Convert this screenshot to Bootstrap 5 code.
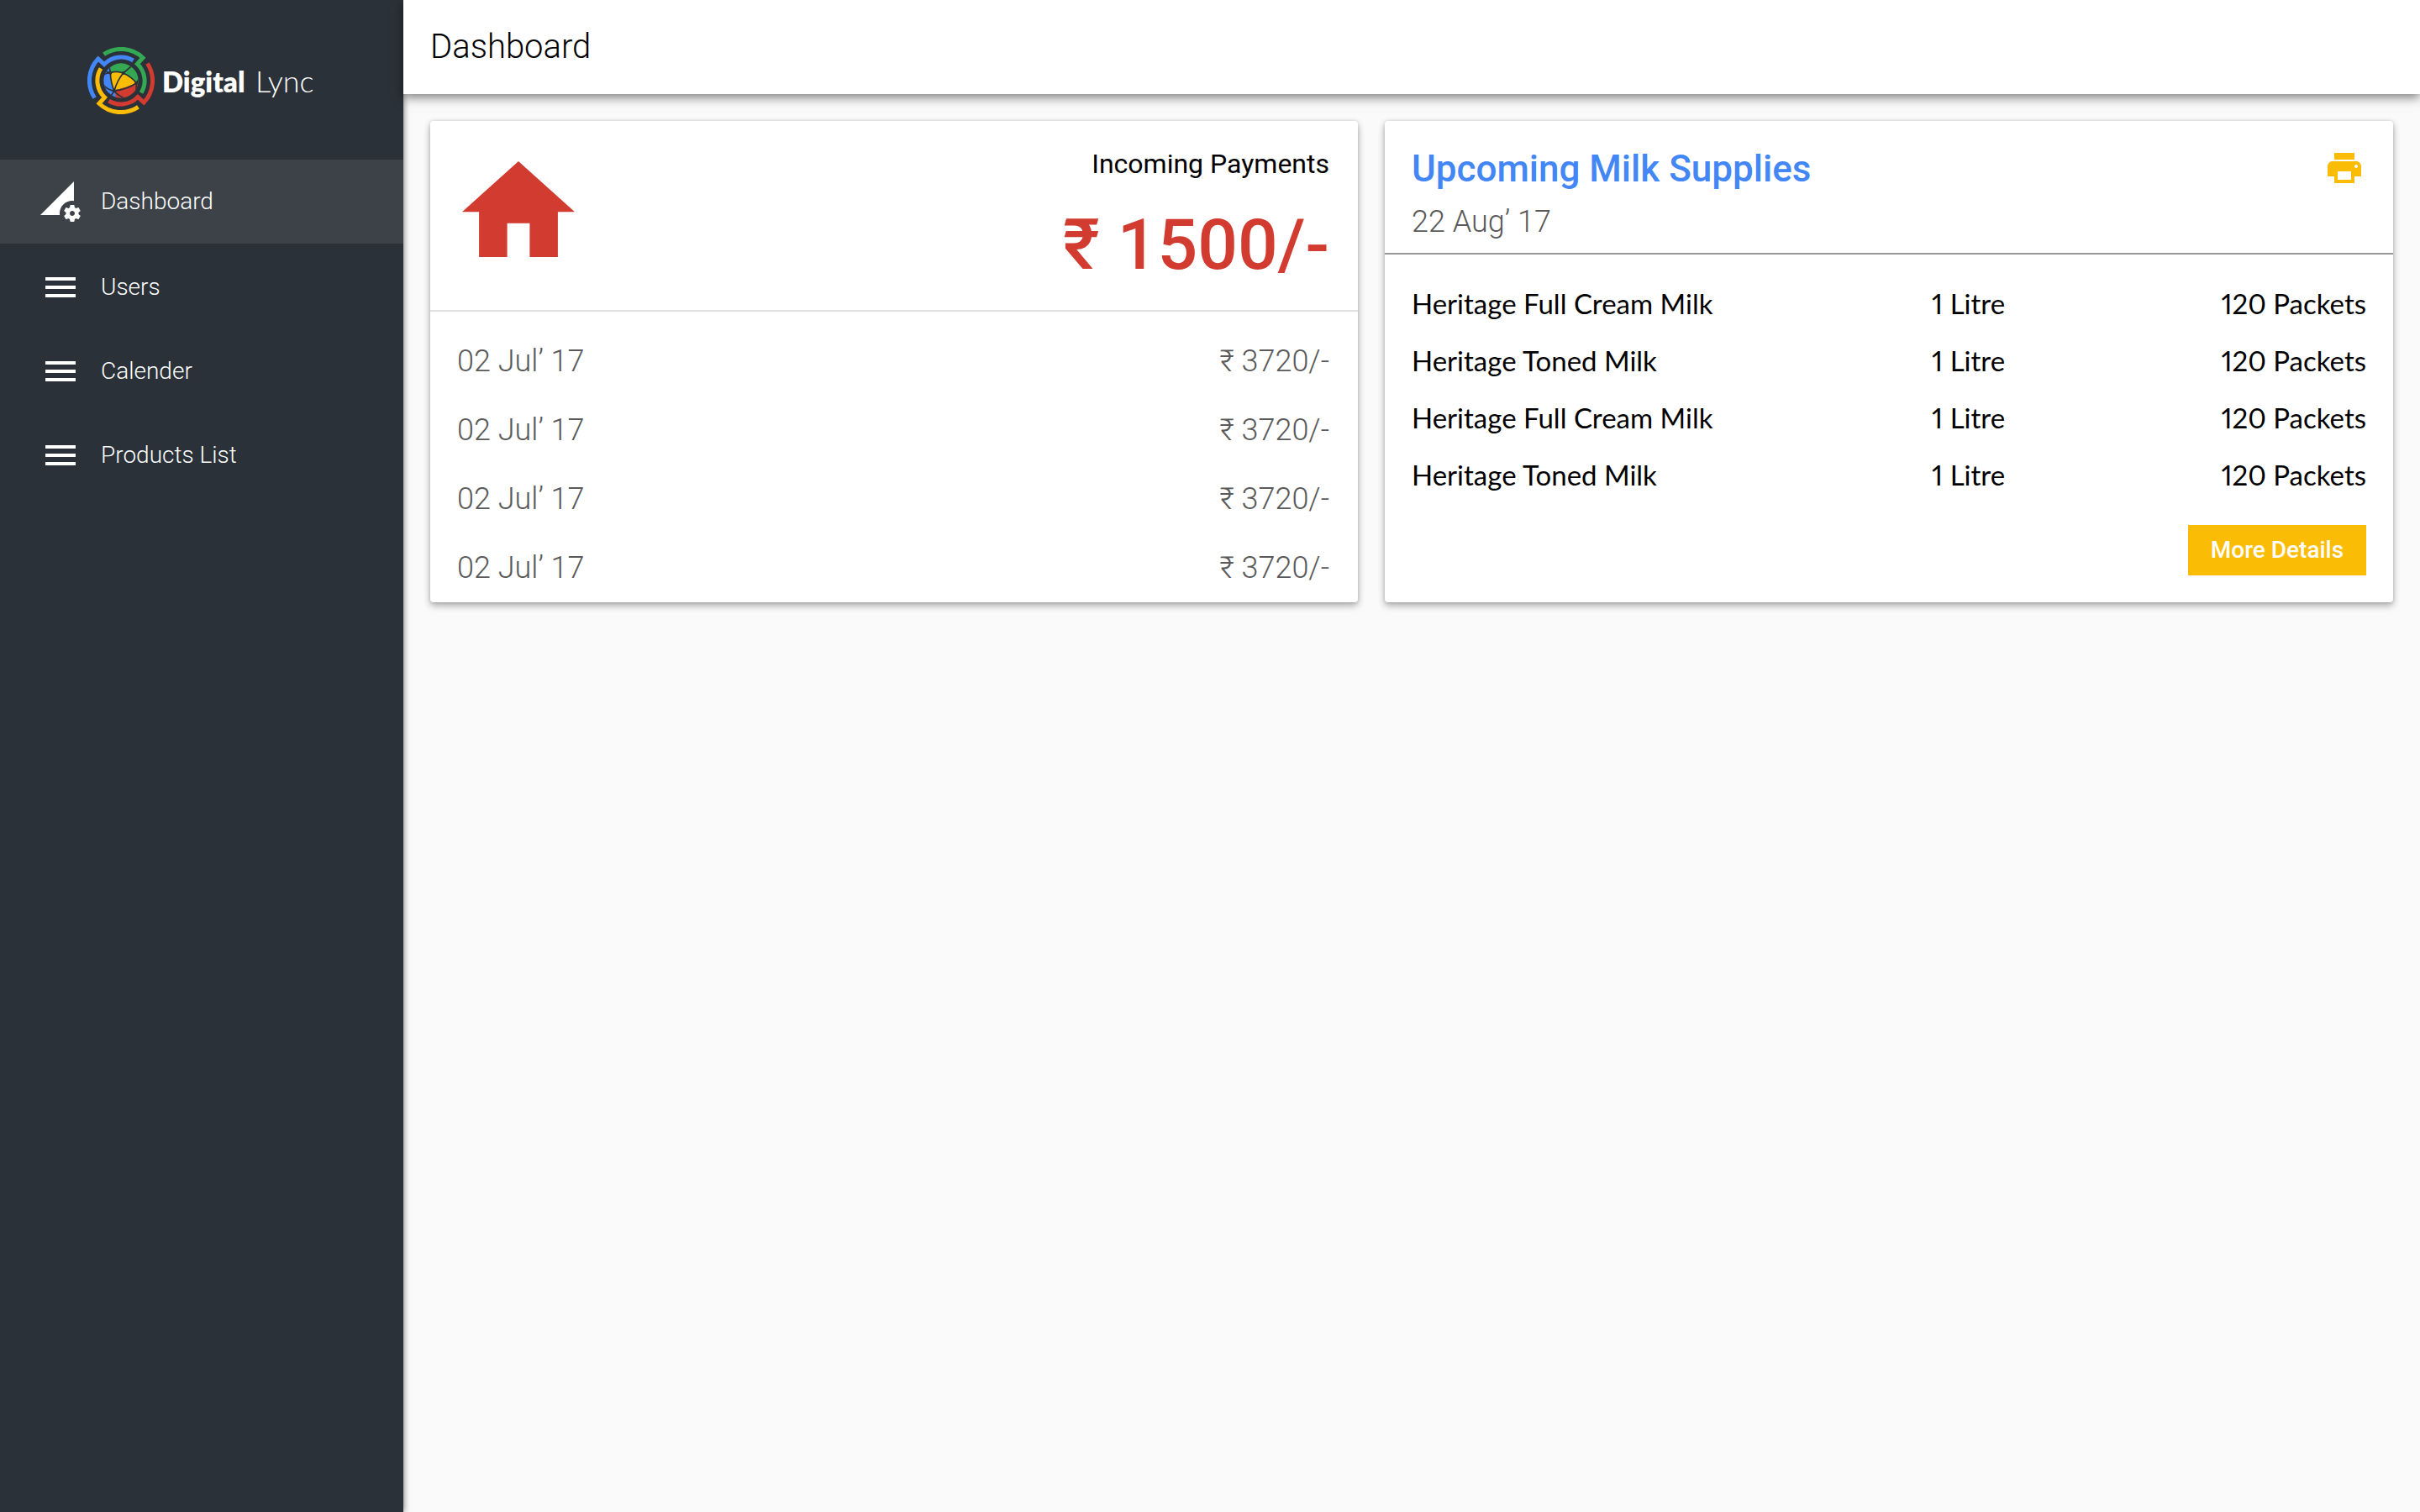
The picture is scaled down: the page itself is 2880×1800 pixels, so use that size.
<!DOCTYPE html>
<html lang="en">
<head>
<meta charset="utf-8">
<meta name="viewport" content="width=device-width, initial-scale=1">
<title>Digital Lync – Dashboard</title>
<link rel="stylesheet" href="https://cdn.jsdelivr.net/npm/bootstrap@5.3.0/dist/css/bootstrap.min.css">
<style>
  body { background: #fafafa; color: #000; font-family: Roboto, "Noto Sans", sans-serif; }
  .fw-thin { font-weight: 300; }
  .side-panel { width: 480px; background: #2a3138; box-shadow: 0 0 8px rgba(0, 0, 0, .6); }
  .brand { height: 190px; padding: 2px 0 0 104px; gap: 9px; color: #fff; font-family: Lato, sans-serif; font-size: 33px; line-height: 40px; }
  .brand b { font-weight: 800; }
  .brand .fw-thin { font-size: 36px; }
  .brand:hover { color: #fff; }
  .side-panel .nav-link { height: 100px; padding: 0 48px; gap: 24px; color: #fff; font-size: 28px; line-height: 44px; font-weight: 300; }
  .side-panel .nav-link.active { background: #3c4248; margin-bottom: 2px; }
  .top-bar { height: 112px; padding: 0 32px; background: #fff; box-shadow: 0 4px 12px rgba(0, 0, 0, .5); z-index: 2; }
  .top-bar h1 { font-size: 40px; line-height: 48px; }
  .panels { padding: 32px; gap: 32px; }
  .panel { border: 0; border-radius: 4px; color: #000; box-shadow: 0 4px 8px rgba(0, 0, 0, .32), 0 0 4px rgba(0, 0, 0, .12); }
  .payments { flex: 1104 1 0; }
  .supplies { flex: 1200 1 0; }
  .pay-head { padding: 32px 34px 25px 38px; border-bottom: 2px solid #e0e0e0; }
  .pay-head svg { margin-top: 16px; }
  .pay-head h2 { font-size: 32px; line-height: 38px; margin-bottom: 26px; }
  .pay-total { font-size: 84px; font-weight: 500; line-height: 104px; color: #d23b30; }
  .pay-list { padding: 18px 34px 0 32px; }
  .pay-list li { font-size: 36px; line-height: 82px; color: #5a5a5a; }
  .sup-head { padding: 28px 32px 3px; border-bottom: 2px solid #979797; }
  .sup-head h2 { font-size: 44px; line-height: 58px; color: #4386f5; }
  .sup-date { font-size: 36px; line-height: 68px; color: #5a5a5a; }
  .print-btn { line-height: 0; margin: 4px 2px 0 0; }
  .sup-body { padding: 24px 32px 32px; }
  .sup-table { font-family: Lato, sans-serif; font-size: 33px; line-height: 68px; font-variant-numeric: proportional-nums; }
  .sup-table th, .sup-table td { padding: 0; }
  .sup-table th { font-weight: 400; }
  .sup-table .col-name { width: 54.5%; }
  .more-btn { width: 212px; height: 60px; padding: 0; border: 0; border-radius: 0; background: #fbbc05; color: #fff; font-size: 28px; line-height: 60px; font-weight: 500; }
</style>
<script src="https://cdn.jsdelivr.net/npm/bootstrap@5.3.0/dist/js/bootstrap.bundle.min.js"></script>
</head>
<body>
<svg class="d-none" aria-hidden="true">
  <symbol id="i-menu" viewBox="0 0 24 24"><path d="M3 18h18v-2H3v2zm0-5h18v-2H3v2zm0-7v2h18V6H3z"/></symbol>
</svg>
<div class="d-flex min-vh-100">
  <aside class="side-panel flex-shrink-0 position-relative z-1">
    <a href="#" class="brand d-flex align-items-center text-decoration-none">
      <svg width="80" height="80" viewBox="-40 -40 80 80" aria-hidden="true">
        <defs>
          <clipPath id="globe"><circle r="62"/></clipPath>
          <path id="arm" d="M-20.5-31.4A37.5 37.5 0 0 1 26-27.2L19.4-20A27.5 27.5 0 0 1 24 14.5" fill="none" stroke-width="5" stroke-miterlimit="10"/>
        </defs>
        <use href="#arm" stroke="#34a853"/>
        <use href="#arm" stroke="#d23b30" transform="rotate(90)"/>
        <use href="#arm" stroke="#fbbc05" transform="rotate(180)"/>
        <use href="#arm" stroke="#4386f5" transform="rotate(270)"/>
        <g transform="scale(.3333)" clip-path="url(#globe)">
          <path fill="#34a853" d="M-40-70H70V8H55Q35-15 8-27Q-15-35-40-30Z"/>
          <path fill="#4386f5" d="M-70-70H-38V-30Q-38 5-24 34L-10 70H-70Z"/>
          <path fill="#fbbc05" d="M-38-28Q-15-35 8-27Q35-15 55 8Q20 25-24 34Q-38 5-38-28Z"/>
          <path fill="#d23b30" d="M-24 34Q20 25 55 8H70V70H-16Z"/>
          <g fill="none" stroke="#2a3138" stroke-width="5">
            <path d="M-44-64Q-40-40-38-28Q-37 5-24 38Q-8 56 22 68M-66-20Q-50-28-38-28Q-15-36 8-27Q35-15 55 8L54 46M8-27L38-52M8-27Q-14 0-24 36L-40 62M-66 12Q-50 32-24 37Q28 30 55 8L66-8M-38-28L-62-36"/>
          </g>
          <g fill="#2a3138"><circle cx="8" cy="-27" r="6"/><circle cx="-24" cy="37" r="6"/><circle cx="-38" cy="-28" r="6"/><circle cx="55" cy="8" r="6"/></g>
        </g>
      </svg>
      <span><b>Digital</b> <span class="fw-thin ms-1">Lync</span></span>
    </a>
    <nav class="nav flex-column">
      <a class="nav-link active d-flex align-items-center" href="#" aria-current="page">
        <svg width="48" height="48" viewBox="0 0 24 24" fill="currentColor" aria-hidden="true"><path d="M18.99 11.5c.34 0 .67.03 1 .07L20 0 0 20h11.56c-.04-.33-.07-.66-.07-1 0-4.14 3.36-7.5 7.5-7.5zm3.71 7.99c.02-.16.04-.32.04-.49 0-.17-.01-.33-.04-.49l1.06-.83c.09-.08.12-.21.06-.32l-1-1.73c-.06-.11-.19-.15-.31-.11l-1.24.5c-.26-.2-.54-.37-.85-.49l-.19-1.32c-.01-.12-.12-.21-.24-.21h-2c-.12 0-.23.09-.25.21l-.19 1.32c-.3.13-.59.29-.85.49l-1.24-.5c-.11-.04-.24 0-.31.11l-1 1.73c-.06.11-.04.24.06.32l1.06.83c-.02.16-.03.32-.03.49 0 .17.01.33.03.49l-1.06.83c-.09.08-.12.21-.06.32l1 1.73c.06.11.19.15.31.11l1.24-.5c.26.2.54.37.85.49l.19 1.32c.02.12.12.21.25.21h2c.12 0 .23-.09.25-.21l.19-1.32c.3-.13.59-.29.84-.49l1.25.5c.11.04.24 0 .31-.11l1-1.73c.06-.11.03-.24-.06-.32l-1.07-.83zm-3.71 1.01c-.83 0-1.5-.67-1.5-1.5s.67-1.5 1.5-1.5 1.5.67 1.5 1.5-.67 1.5-1.5 1.5z"/></svg>
        Dashboard
      </a>
      <a class="nav-link d-flex align-items-center" href="#"><svg width="48" height="48" fill="currentColor" aria-hidden="true"><use href="#i-menu"/></svg>Users</a>
      <a class="nav-link d-flex align-items-center" href="#"><svg width="48" height="48" fill="currentColor" aria-hidden="true"><use href="#i-menu"/></svg>Calender</a>
      <a class="nav-link d-flex align-items-center" href="#"><svg width="48" height="48" fill="currentColor" aria-hidden="true"><use href="#i-menu"/></svg>Products List</a>
    </nav>
  </aside>

  <div class="flex-grow-1 d-flex flex-column">
    <header class="top-bar d-flex align-items-center position-relative">
      <h1 class="fw-thin mb-0">Dashboard</h1>
    </header>
    <main class="panels d-flex align-items-stretch">
      <section class="card panel payments">
        <div class="pay-head d-flex justify-content-between align-items-start">
          <svg width="134" height="114" viewBox="2 3 20 17" fill="#d23b30" aria-hidden="true"><path d="M10 20v-6h4v6h5v-8h3L12 3 2 12h3v8z"/></svg>
          <div class="text-end">
            <h2 class="fw-normal">Incoming Payments</h2>
            <div class="pay-total">₹ 1500/-</div>
          </div>
        </div>
        <ul class="pay-list list-unstyled mb-0 fw-thin">
          <li class="d-flex justify-content-between"><span>02 Jul’ 17</span><span>₹ 3720/-</span></li>
          <li class="d-flex justify-content-between"><span>02 Jul’ 17</span><span>₹ 3720/-</span></li>
          <li class="d-flex justify-content-between"><span>02 Jul’ 17</span><span>₹ 3720/-</span></li>
          <li class="d-flex justify-content-between"><span>02 Jul’ 17</span><span>₹ 3720/-</span></li>
        </ul>
      </section>

      <section class="card panel supplies">
        <div class="sup-head d-flex justify-content-between align-items-start">
          <div>
            <h2 class="mb-0">Upcoming Milk Supplies</h2>
            <div class="sup-date fw-thin">22 Aug’ 17</div>
          </div>
          <button type="button" class="btn print-btn border-0 p-0" aria-label="Print">
            <svg width="48" height="48" viewBox="0 0 24 24" fill="#fbbc05" aria-hidden="true"><path d="M19 8H5c-1.660 0-3 1.340-3 3v6h4v4h12v-4h4v-6c0-1.660-1.340-3-3-3zm-3 11H8v-5h8v5zm3-7c-.55 0-1-.45-1-1s.45-1 1-1 1 .45 1 1-.45 1-1 1zm-1-9H6v4h12V3z"/></svg>
          </button>
        </div>
        <div class="sup-body d-flex flex-column flex-grow-1">
          <table class="sup-table w-100">
            <tbody>
              <tr><th scope="row" class="col-name">Heritage Full Cream Milk</th><td>1 Litre</td><td class="text-end">120 Packets</td></tr>
              <tr><th scope="row">Heritage Toned Milk</th><td>1 Litre</td><td class="text-end">120 Packets</td></tr>
              <tr><th scope="row">Heritage Full Cream Milk</th><td>1 Litre</td><td class="text-end">120 Packets</td></tr>
              <tr><th scope="row">Heritage Toned Milk</th><td>1 Litre</td><td class="text-end">120 Packets</td></tr>
            </tbody>
          </table>
          <button type="button" class="btn more-btn align-self-end mt-auto">More Details</button>
        </div>
      </section>
    </main>
  </div>
</div>
</body>
</html>
